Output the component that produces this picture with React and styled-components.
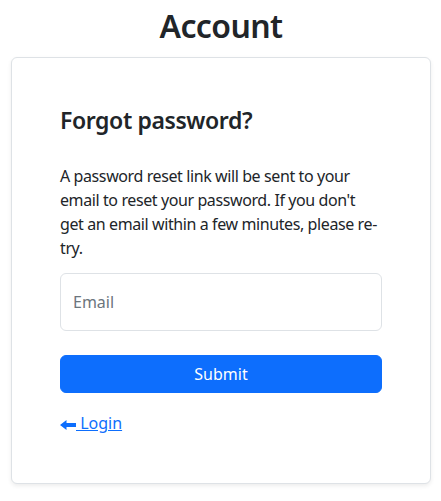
import React from 'react';
import styled, { createGlobalStyle } from 'styled-components';

const GlobalStyle = createGlobalStyle`
  * { box-sizing: border-box; }
  body {
    margin: 0;
    background: #ffffff;
    color: #212529;
    font-family: "Noto Sans", "Open Sans", sans-serif;
    font-size: 16px;
    line-height: 1.5;
  }
`;

const ArrowIcon = () => (
  <svg viewBox="0 0 16 10" width="16" height="10" aria-hidden="true">
    <path d="M0 5 L6.5 0 L6.5 3 L16 3 L16 7 L6.5 7 L6.5 10 Z" fill="currentColor" />
  </svg>
);

const App = () => {
  return (
    <>
      <GlobalStyle />
      <Page>
        <Title>Account</Title>
        <Card>
          <Heading>Forgot password?</Heading>
          <Text>
            A password reset link will be sent to your email to reset your password. If you don't get an
            email within a few minutes, please re-try.
          </Text>
          <EmailInput type="email" placeholder="Email" />
          <SubmitButton type="button">Submit</SubmitButton>
          <LinkRow>
            <BackLink href="#">
              <ArrowIcon /> Login
            </BackLink>
          </LinkRow>
        </Card>
      </Page>
    </>
  );
};

export default App;

const Page = styled.div`
  padding: 7px 10px 16px 11px;
  display: flex;
  flex-direction: column;
  align-items: stretch;
`;

const Title = styled.h2`
  margin: 0 0 12px;
  text-align: center;
  font-size: 32px;
  font-weight: 600;
  line-height: 1.2;
  letter-spacing: -0.6px;
`;

const Card = styled.div`
  display: flex;
  flex-direction: column;
  align-items: stretch;
  padding: 48px;
  background: #fff;
  border: 1px solid #dee2e6;
  border-radius: 6px;
  box-shadow: 0 2px 4px rgba(0, 0, 0, 0.075);
`;

const Heading = styled.h3`
  margin: 0 0 29px;
  font-size: 23px;
  font-weight: 600;
  line-height: 1.25;
  letter-spacing: -0.4px;
`;

const Text = styled.p`
  margin: 0 0 13px;
  font-size: 16px;
  line-height: 24px;
  letter-spacing: -0.4px;
`;

const EmailInput = styled.input`
  height: 58px;
  padding: 0 12px;
  margin: 0 0 24px;
  border: 1px solid #dee2e6;
  border-radius: 6px;
  font-family: inherit;
  font-size: 16px;
  color: #212529;
  outline: none;
  &::placeholder {
    color: #6c757d;
  }
`;

const SubmitButton = styled.button`
  height: 38px;
  margin: 0 0 18px;
  border: 1px solid #0d6efd;
  border-radius: 6px;
  background: #0d6efd;
  color: #fff;
  font-family: inherit;
  font-size: 16px;
  cursor: pointer;
`;

const LinkRow = styled.div`
  line-height: 24px;
`;

const BackLink = styled.a`
  color: #0d6efd;
  text-decoration: underline;
  font-size: 16px;
  svg {
    vertical-align: -1px;
  }
`;
